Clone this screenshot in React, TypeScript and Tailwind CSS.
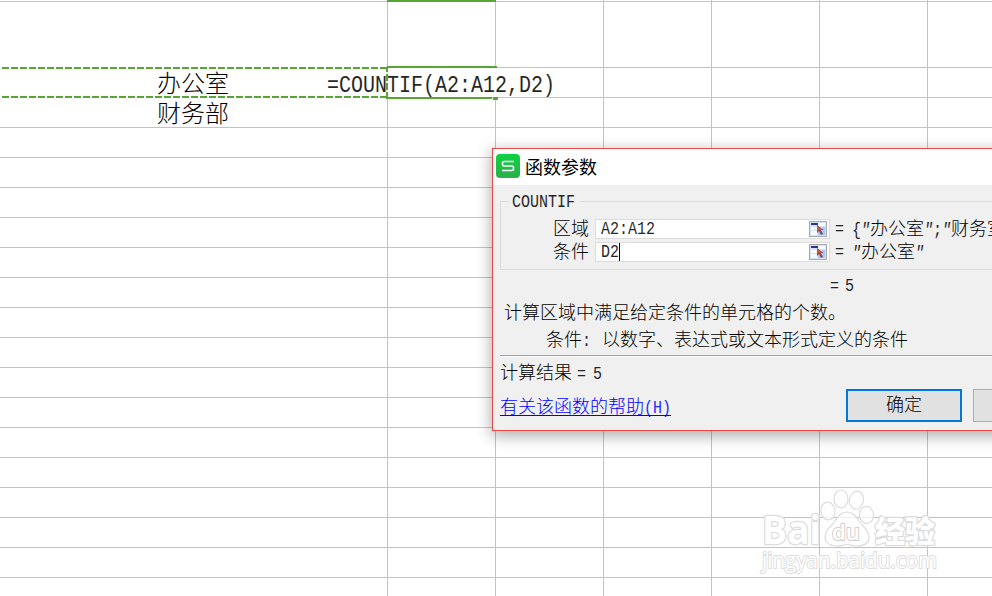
import type { ReactNode } from 'react'

const rows = Array.from({ length: 18 }, (_, i) => i)
const cols = [0, 1, 2, 3, 4, 5, 6]

// Half-width latin text: every character takes half an em
function Half({ children, italic }: { children: string; italic?: boolean }) {
  return (
    <span className="inline-block whitespace-pre" style={{ width: `${children.length / 2}em` }}>
      <span className={italic ? 'inline-block origin-left scale-x-[0.8333] italic opacity-85' : 'inline-block origin-left scale-x-[0.8333] opacity-85'}>
        {children}
      </span>
    </span>
  )
}

function GridRow({ className }: { className: string }) {
  return (
    <div className={`grid grid-cols-[388px_repeat(6,108px)] ${className}`}>
      {cols.map((c) => (
        <div key={c} className="border-r border-b border-[#c3c3c3]" />
      ))}
    </div>
  )
}

function PickerIcon() {
  return (
    <svg className="block" width="18" height="16" viewBox="0 0 18 16" shapeRendering="crispEdges">
      <rect width="18" height="16" fill="#a9a9ad" />
      <rect x="1" y="1" width="16" height="14" fill="#d6e2fa" />
      <path d="M2 6h6v3H2zM2 10h6v4H2zM9 2h7v3H9z" fill="#f8fbff" />
      <path d="M13 6h3v8h-7v-3h4z" fill="#a9c6f8" />
      <rect x="2" y="2" width="7" height="2" fill="#31318c" />
      <path d="M8 4v8l2-2 2 4 2-1-2-4h2.500z" fill="#8c4a48" shapeRendering="auto" />
      <path d="M8 4v6l1.500-1H13z" fill="#c9583f" shapeRendering="auto" />
    </svg>
  )
}

function Field({ label, value, active, children }: { label: string; value: string; active?: boolean; children: ReactNode }) {
  return (
    <div className="flex h-5 items-center">
      <span className="w-[95px] shrink-0 pt-[2px] pr-[6px] text-right">{label}</span>
      <div className="flex h-5 w-[235px] shrink-0 items-center border border-[#dcdcdc] bg-white pr-[2px] pl-[5px]">
        <Half>{value}</Half>
        {active && <span className="h-[18px] w-px bg-black" />}
        <span className="ml-auto">
          <PickerIcon />
        </span>
      </div>
      <span className="ml-[5px] w-[17px] shrink-0">
        <Half>=</Half>
      </span>
      <span className="pt-px">{children}</span>
    </div>
  )
}

function Watermark() {
  return (
    <div className="absolute top-[485px] left-[755px] h-[95px] w-[190px]">
      <svg width="190" height="95" viewBox="0 0 190 95" fill="#fff" fillOpacity="0.75" stroke="#dcdcdc" strokeWidth="1.2">
        <ellipse cx="73" cy="26" rx="7" ry="9" transform="rotate(-8 73 26)" />
        <ellipse cx="86" cy="14" rx="7" ry="9" />
        <ellipse cx="101.500" cy="15" rx="7" ry="9" transform="rotate(12 101 15)" />
        <ellipse cx="111.500" cy="30" rx="7" ry="8.500" transform="rotate(-10 111 30)" />
        <path d="M92 27c6 0 9 4 12 9 4 6 10 9 10 16 0 7-6 9-12 9-5 0-7-1.500-10-1.500S87 61 82 61c-7 0-12-3-12-9 0-7 6-10 10-16 3-5 6-9 12-9z" />
        <g fontFamily="Open Sans, sans-serif" fontWeight="bold" strokeWidth="2.6" stroke="#dddddd" fillOpacity="1" paintOrder="stroke" strokeLinejoin="round">
          <text x="7" y="59" fontSize="39" textLength="59" lengthAdjust="spacingAndGlyphs">Bai</text>
          <text x="77" y="55" fontSize="22" textLength="28" lengthAdjust="spacingAndGlyphs" fontWeight="600" strokeWidth="2" stroke="#cfcfcf">du</text>
          <text x="120" y="57" fontSize="30" textLength="60" fontFamily="Noto Sans CJK SC, sans-serif" fontWeight="900">经验</text>
          <text x="7" y="83" fontSize="21" textLength="175" lengthAdjust="spacingAndGlyphs" fontWeight="normal" strokeWidth="2">jingyan.baidu.com</text>
        </g>
      </svg>
    </div>
  )
}

function Dialog() {
  return (
    <div className="absolute top-[148px] left-[492px] flex h-[283px] w-[560px] flex-col border border-[#e54a47] bg-[#f0f0f0] shadow-[0_4px_14px_1px_rgba(0,0,0,0.32)] text-[18px] leading-5">
      {/* Title bar */}
      <div className="flex h-9 shrink-0 items-center gap-[5px] bg-white pl-[3px]">
        <div className="-mt-[2px] flex size-6 items-center justify-center rounded-[4px] bg-gradient-to-b from-[#06d23e] to-[#29ae4c]">
          <svg width="14" height="12" viewBox="0 0 14 12" fill="none" stroke="#fff" strokeWidth="1.6">
            <path d="M13 1.500H3Q1.500 1.500 1.500 3v1.500Q1.500 6 3 6h8q1.500 0 1.500 1.500V9q0 1.500-1.500 1.500H1" />
          </svg>
        </div>
        <span className="pt-[3px] font-normal">函数参数</span>
      </div>

      {/* Arguments */}
      <div className="mt-4 ml-[7px] flex h-[69px] shrink-0 flex-col border border-[#dcdcdc]">
        <div className="-mt-[10px] ml-[8px] flex h-5 w-[71px] items-center bg-[#f0f0f0] pl-[3px]">
          <Half>COUNTIF</Half>
        </div>
        <div className="mt-[7px] -ml-px flex flex-col gap-[3px] whitespace-nowrap">
          <Field label="区域" value="A2:A12">
            <Half>{'{'}</Half><Half italic>"</Half>办公室<Half italic>"</Half><Half>;</Half><Half italic>"</Half>财务室
          </Field>
          <Field label="条件" value="D2" active>
            <Half italic>"</Half>办公室<Half italic>"</Half>
          </Field>
        </div>
      </div>

      <div className="mt-[6px] flex h-5 shrink-0 gap-[6px] pl-[337px]">
        <Half>=</Half>
        <Half>5</Half>
      </div>
      <p className="mt-[8px] pl-[11px]">计算区域中满足给定条件的单元格的个数。</p>
      <p className="mt-[7px] pl-[53px]">
        条件<span className="mr-[11px]"><Half>:</Half></span>以数字、表达式或文本形式定义的条件
      </p>
      <div className="mt-[4px] ml-[7px] h-[2px] shrink-0 border-t border-b border-t-[#a0a0a0] border-b-white" />

      <div className="flex pl-[7px]">
        <div className="w-[346px] shrink-0">
          <p className="mt-[7px] flex">
            计算结果<span className="ml-[5px]"><Half>=</Half></span><span className="ml-[7px]"><Half>5</Half></span>
          </p>
          <a className="mt-[14px] inline-flex h-[18px] border-b border-b-[#0000ff] text-[#0000ff]">
            有关该函数的帮助<Half>(H)</Half>
          </a>
        </div>
        <button className="mt-[32px] h-[33px] w-[116px] shrink-0 border-2 border-[#0078d7] bg-[#e1e1e1]">确定</button>
        <button className="mt-[32px] ml-[11px] h-[33px] w-[116px] shrink-0 border border-[#adadad] bg-[#e1e1e1]" />
      </div>
    </div>
  )
}

export default function App() {
  return (
    <div className="relative h-[596px] w-[992px] overflow-hidden bg-white font-['Liberation_Mono','Noto_Sans_CJK_SC',monospace] font-light text-black">
      {/* Sheet */}
      <div className="w-[1036px]">
        <GridRow className="h-[2px]" />
        <GridRow className="h-[66px]" />
        {rows.map((r) => (
          <GridRow key={r} className="h-[30px]" />
        ))}
      </div>

      {/* Cell contents */}
      <div className="absolute top-[68px] left-0 flex h-[29px] w-[556px] bg-white pt-[3px] text-[24px] leading-[29px]">
        <span className="w-[327px] pl-[157px]">办公室</span>
        <Half>=COUNTIF(A2:A12,D2)</Half>
      </div>
      <div className="absolute top-[101px] left-[157px] text-[24px] leading-[29px]">财务部</div>

      {/* Copied range and active cell outlines */}
      <div className="absolute top-[67px] left-0 h-[31px] w-[387px]">
        <div className="h-[2px] bg-[repeating-linear-gradient(90deg,#57a533_0_7px,#fff_7px_9px)] bg-[position:2px_0]" />
        <div className="mt-[27px] h-[2px] bg-[repeating-linear-gradient(90deg,#57a533_0_7px,#fff_7px_9px)] bg-[position:2px_0]" />
      </div>
      <div className="absolute top-0 left-[387px] h-[2px] w-[109px] bg-[#57a533]" />
      <div className="absolute top-[66px] left-[386px] h-[34px] w-[112px]">
        <div className="ml-px h-[2px] w-[110px] bg-[#57a533]" />
        <div className="h-[29px] w-[2px] bg-[repeating-linear-gradient(180deg,#57a533_0_4px,#fff_4px_6px,#57a533_6px_9px)]" />
        <div className="flex gap-px">
          <div className="h-[2px] w-[106px] bg-[#57a533]" />
          <div className="h-[3px] w-[5px] bg-[#57a533]" />
        </div>
      </div>

      <Dialog />
      <Watermark />
    </div>
  )
}
